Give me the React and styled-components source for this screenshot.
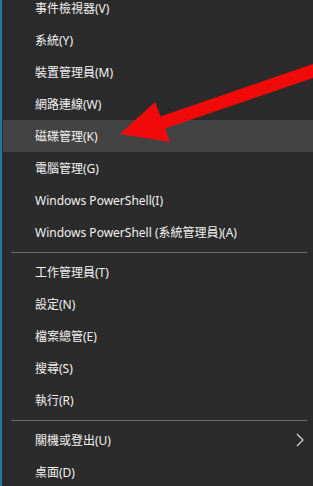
import React from "react";
import styled, { createGlobalStyle } from "styled-components";

const GlobalStyle = createGlobalStyle`
  html, body {
    margin: 0;
    padding: 0;
    background: #2b2b2b;
    overflow: hidden;
  }
`;

const items = [
  { label: "事件檢視器(V)" },
  { label: "系統(Y)" },
  { label: "裝置管理員(M)" },
  { label: "網路連線(W)" },
  { label: "磁碟管理(K)", active: true },
  { label: "電腦管理(G)" },
  { label: "Windows PowerShell(I)" },
  { label: "Windows PowerShell (系統管理員)(A)" },
  { divider: true },
  { label: "工作管理員(T)" },
  { label: "設定(N)" },
  { label: "檔案總管(E)" },
  { label: "搜尋(S)" },
  { label: "執行(R)" },
  { divider: true },
  { label: "關機或登出(U)", sub: true },
  { label: "桌面(D)" },
];

const App = () => {
  return (
    <>
      <GlobalStyle />
      <Screen>
        <Menu>
          {items.map((it, i) =>
            it.divider ? (
              <Divider key={i} />
            ) : (
              <MenuItem key={i} $active={it.active}>
                <Label>{it.label}</Label>
                {it.sub && (
                  <Chevron viewBox="0 0 8 14">
                    <path d="M1 1 L7 7 L1 13" />
                  </Chevron>
                )}
              </MenuItem>
            )
          )}
        </Menu>
        <Arrow viewBox="0 0 313 486">
          <polygon points="313,64 160.5,116.5 155,102 120,134 170,142 165,128.5 313,78" />
        </Arrow>
      </Screen>
    </>
  );
};

export default App;

const Screen = styled.div`
  position: relative;
  width: 313px;
  height: 486px;
  overflow: hidden;
  background: #2b2b2b;
  border-left: 2px solid #1f78a8;
  box-sizing: border-box;
  font-family: "Noto Sans", "Noto Sans CJK TC", sans-serif;
`;

const Menu = styled.div`
  display: flex;
  flex-direction: column;
  margin-top: -8px;
  padding-left: 1px;
`;

const MenuItem = styled.div`
  display: flex;
  align-items: center;
  justify-content: space-between;
  height: 32px;
  padding: 0 9px 0 32px;
  background: ${(p) => (p.$active ? "#434343" : "transparent")};
`;

const Label = styled.span`
  color: #f2f2f2;
  font-size: 12px;
  white-space: nowrap;
`;

const Chevron = styled.svg`
  width: 8px;
  height: 14px;
  fill: none;
  stroke: #d8d8d8;
  stroke-width: 1.2;
`;

const Divider = styled.div`
  height: 8px;
  display: flex;
  align-items: center;
  padding: 0 6px 0 8px;
  &::after {
    content: "";
    flex: 1;
    height: 1px;
    background: #6b6b6b;
  }
`;

const Arrow = styled.svg`
  position: absolute;
  left: -2px;
  top: 0;
  width: 313px;
  height: 486px;
  fill: #f20a0a;
  pointer-events: none;
`;
